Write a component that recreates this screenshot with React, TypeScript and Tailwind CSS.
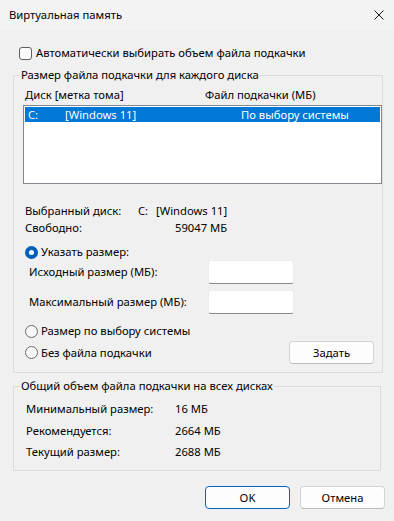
import React from "react";

const Radio = ({ checked, label }: { checked?: boolean; label: string }) => (
  <div className="flex items-center gap-[3px]">
    {checked ? (
      <span className="flex h-[13px] w-[13px] items-center justify-center rounded-full bg-[#005fb8]">
        <span className="h-[5px] w-[5px] rounded-full bg-white" />
      </span>
    ) : (
      <span className="h-[13px] w-[13px] rounded-full border border-[#6b6b6b] bg-[#f7f7f7]" />
    )}
    <span>{label}</span>
  </div>
);

const Button = ({ label, primary }: { label: string; primary?: boolean }) => (
  <button
    className={`flex h-[23px] w-[85px] items-center justify-center rounded-[4px] border bg-[#fdfdfd] ${
      primary ? "border-[#0067c0]" : "border-[#d3d3d3] border-b-[#bcbcbc]"
    }`}
  >
    {label}
  </button>
);

const SizeInput = () => (
  <div className="h-[24px] w-[86px] rounded-[3px] border border-[#ececec] border-b-[#8a8a8a] bg-white" />
);

export default function App() {
  return (
    <div className="flex h-[521px] w-[394px] flex-col bg-[#f0f0f0] font-['Noto_Sans','Liberation_Sans',sans-serif] text-[11.25px] leading-[16px] text-black">
      <div className="flex h-[30px] items-center justify-between bg-[#f3f3f3] pl-[9px] pr-[10px]">
        <span>Виртуальная память</span>
        <svg width="10" height="10" viewBox="0 0 10 10" className="text-[#1a1a1a]">
          <path d="M0.5 0.5 L9.5 9.5 M9.5 0.5 L0.5 9.5" stroke="currentColor" strokeWidth="1" />
        </svg>
      </div>

      <div className="flex flex-col pl-[13px] pr-[13px]">
        <div className="mt-[15px] flex h-[16px] items-center gap-[4px] pl-[6px]">
          <span className="h-[13px] w-[13px] rounded-[3px] border border-[#5f5f5f] bg-[#fbfbfb]" />
          <span>Автоматически выбирать объем файла подкачки</span>
        </div>

        <fieldset className="mt-[6px] w-[368px] border border-[#dcdcdc] pb-[8px]">
          <legend className="ml-[6px] px-[1px]">Размер файла подкачки для каждого диска</legend>

          <div className="mt-[4px] flex h-[16px] items-center pl-[11px]">
            <span className="w-[180px]">Диск [метка тома]</span>
            <span>Файл подкачки (МБ)</span>
          </div>

          <div className="ml-[9px] mt-[2px] h-[79px] w-[359px] border border-[#828790] bg-white p-[1px]">
            <div className="flex h-[15px] items-center bg-[#0078d7] pl-[3px] text-white">
              <span className="w-[37px]">C:</span>
              <span className="w-[176px]">[Windows 11]</span>
              <span>По выбору системы</span>
            </div>
          </div>

          <div className="mt-[19px] flex h-[16px] items-center pl-[11px]">
            <span className="w-[113px]">Выбранный диск:</span>
            <span className="w-[18px]">C:</span>
            <span>[Windows 11]</span>
          </div>
          <div className="mt-[1px] flex h-[16px] items-center pl-[11px]">
            <span className="w-[150px]">Свободно:</span>
            <span>59047 МБ</span>
          </div>

          <div className="mt-[8px] flex h-[16px] items-center pl-[11px]">
            <Radio checked label="Указать размер:" />
          </div>
          <div className="flex h-[24px] items-center pl-[15px]">
            <span className="w-[179px]">Исходный размер (МБ):</span>
            <SizeInput />
          </div>
          <div className="mt-[6px] flex h-[24px] items-center pl-[15px]">
            <span className="w-[179px]">Максимальный размер (МБ):</span>
            <SizeInput />
          </div>

          <div className="mt-[9px] flex h-[16px] items-center pl-[11px]">
            <Radio label="Размер по выбору системы" />
          </div>
          <div className="mt-[2px] flex h-[23px] items-center pl-[11px] pr-[8px]">
            <Radio label="Без файла подкачки" />
            <div className="ml-auto">
              <Button label="Задать" />
            </div>
          </div>
        </fieldset>

        <fieldset className="mt-[5px] w-[368px] border border-[#dcdcdc] pb-[10px]">
          <legend className="ml-[6px] px-[1px]">Общий объем файла подкачки на всех дисках</legend>
          <div className="mt-[7px] flex h-[16px] items-center pl-[12px]">
            <span className="w-[149px]">Минимальный размер:</span>
            <span>16 МБ</span>
          </div>
          <div className="mt-[6px] flex h-[16px] items-center pl-[12px]">
            <span className="w-[149px]">Рекомендуется:</span>
            <span>2664 МБ</span>
          </div>
          <div className="mt-[5px] flex h-[16px] items-center pl-[12px]">
            <span className="w-[149px]">Текущий размер:</span>
            <span>2688 МБ</span>
          </div>
        </fieldset>
      </div>

      <div className="mt-[15px] flex justify-end gap-[10px] pr-[9px]">
        <Button primary label="OK" />
        <Button label="Отмена" />
      </div>
    </div>
  );
}
